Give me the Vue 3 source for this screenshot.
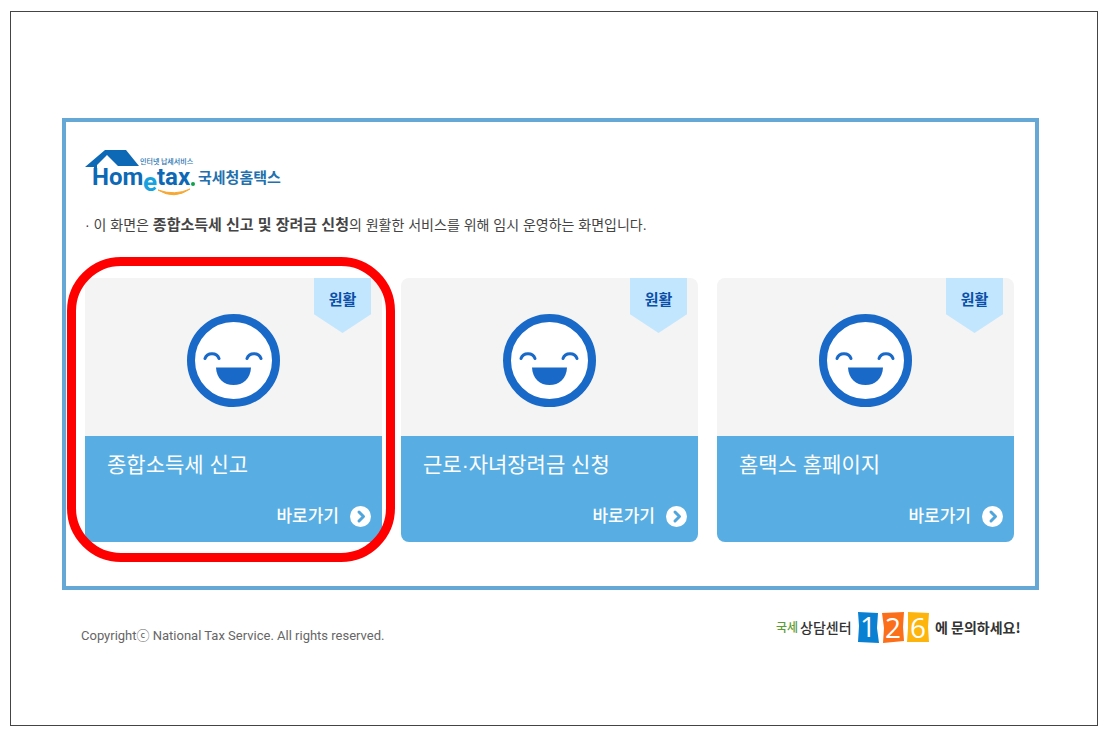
<script setup>
const services = [
  { title: '종합소득세 신고', status: '원활', highlighted: true },
  { title: '근로·자녀장려금 신청', status: '원활', highlighted: false },
  { title: '홈택스 홈페이지', status: '원활', highlighted: false },
]
</script>

<template>
  <div class="frame">
    <main class="panel">
      <svg class="logo" viewBox="0 0 200 48" role="img" aria-label="Hometax 국세청홈택스">
        <path d="M0 18 L20 1 H41 L54 17 H33 L22 6 L12 16 V20 H9 V18 Z" fill="#0d69b5" />
        <text class="latin" x="7" y="36">Hom</text>
        <text class="latin accent" x="58" y="42">e</text>
        <text class="latin" x="72" y="36">tax</text>
        <circle cx="108" cy="35" r="2" fill="#12a04b" />
        <path d="M73 41 Q89 51 105 40 Q90 47 73 41 Z" fill="#f6a833" stroke="#f6a833" stroke-width="1" />
        <text class="tagline" x="55" y="15">인터넷 납세서비스</text>
        <text class="korean" x="113" y="34">국세청홈택스</text>
      </svg>

      <p class="notice">
        · 이 화면은 <strong>종합소득세 신고 및 장려금 신청</strong>의 원활한 서비스를 위해 임시 운영하는 화면입니다.
      </p>

      <ul class="cards">
        <li v-for="service in services" :key="service.title" class="card">
          <div class="visual">
            <svg class="face" viewBox="0 0 93 93" aria-hidden="true">
              <circle cx="46.5" cy="46.5" r="42.5" fill="#fff" stroke="#1969c8" stroke-width="8" />
              <path d="M18 44.500 C20 38 30 38 32 44.500 M60 44.500 C62 38 72 38 74 44.500" fill="none" stroke="#1969c8" stroke-width="3" stroke-linecap="round" />
              <path d="M29 53.500 H64 C63.500 65 56 71 46.500 71 C37 71 29.500 65 29 53.500 Z" fill="#1969c8" />
            </svg>
            <span class="badge">{{ service.status }}</span>
          </div>
          <div class="body">
            <h2>{{ service.title }}</h2>
            <a class="go" href="#">
              바로가기
              <svg viewBox="0 0 21 21" aria-hidden="true">
                <circle cx="10.5" cy="10.5" r="10.5" fill="#fff" />
                <path d="M9 6 L13.500 10.500 L9 15" fill="none" stroke="#4ea6dc" stroke-width="3" stroke-linecap="round" stroke-linejoin="round" />
              </svg>
            </a>
          </div>
          <span v-if="service.highlighted" class="highlight" aria-hidden="true"></span>
        </li>
      </ul>
    </main>

    <footer class="footer">
      <p class="copyright">Copyrightⓒ National Tax Service. All rights reserved.</p>
      <svg class="callcenter" viewBox="0 0 246 36" role="img" aria-label="국세상담센터 126에 문의하세요!">
        <text class="hand green" x="1" y="22">국세</text>
        <text class="hand" x="25" y="23">상담센터</text>
        <path d="M83 2 L103 3 L102 18 L104 33 L83 32 L84 16 Z" fill="#0a80d2" />
        <path d="M107 3 L129 2 L128 17 L129 31 L108 33 L109 18 Z" fill="#fb6f1b" />
        <path d="M133 2 L154 3 L153 17 L154 32 L132 32 L133 18 Z" fill="#fdb50d" />
        <text class="digit" x="93" y="27">1</text>
        <text class="digit" x="118" y="28">2</text>
        <text class="digit" x="143" y="28">6</text>
        <text class="ask" x="160" y="23">에 문의하세요!</text>
      </svg>
    </footer>
  </div>
</template>

<style>
body {
  margin: 0;
  background: #fff;
}
</style>

<style scoped>
.frame {
  margin: 11px 13px 13px 10px;
  padding: 106px 58px 79px 51px;
  border: 1px solid #444;
  font-family: "Liberation Sans", "Noto Sans CJK KR", sans-serif;
  color: #444;
}

.panel {
  padding: 27px 21px 44px 19px;
  border: 4px solid #65a8d5;
}

.logo {
  display: block;
  width: 200px;
  height: 48px;
}

.latin {
  font: 700 24px Roboto, sans-serif;
  fill: #0d69b5;
}

.accent {
  font-size: 26px;
  fill: #16a3e0;
}

.tagline,
.korean {
  font: 500 7px "Noto Sans CJK KR", sans-serif;
  fill: #2370ae;
}

.korean {
  font-size: 15px;
  font-weight: 700;
}

.notice {
  margin: 18px 0 43px;
  font-size: 14px;
  line-height: 20px;
}

.notice strong {
  font-size: 15px;
}

.cards {
  display: grid;
  grid-template-columns: repeat(3, 1fr);
  gap: 19px;
  margin: 0;
  padding: 0;
  list-style: none;
}

.card {
  position: relative;
}

.visual {
  display: flex;
  justify-content: center;
  padding: 36px 0 29px;
  border-radius: 8px 8px 0 0;
  background: #f4f4f4;
}

.face {
  width: 93px;
  height: 93px;
}

.badge {
  position: absolute;
  top: 0;
  right: 11px;
  width: 57px;
  height: 55px;
  background: #c3e6ff;
  clip-path: polygon(0 0, 100% 0, 100% 66%, 50% 100%, 0 66%);
  color: #0b50a8;
  font-size: 15px;
  font-weight: 700;
  line-height: 44px;
  text-align: center;
}

.body {
  padding: 14px 11px 15px 22px;
  border-radius: 0 0 8px 8px;
  background: #58aee3;
  color: #fff;
}

h2 {
  margin: 0 0 26px;
  font-size: 21px;
  font-weight: 400;
  line-height: 30px;
}

.go {
  display: flex;
  align-items: center;
  justify-content: flex-end;
  gap: 11px;
  color: #fff;
  font-size: 17px;
  font-weight: 500;
  line-height: 21px;
  text-decoration: none;
}

.go svg {
  width: 21px;
  height: 21px;
}

.highlight {
  position: absolute;
  inset: -21px -13px -20px -18px;
  border: 9px solid #f00;
  border-radius: 54px;
  pointer-events: none;
}

.footer {
  display: flex;
  align-items: flex-end;
  justify-content: space-between;
  margin-top: 20px;
  padding: 0 18px 0 19px;
}

.copyright {
  margin: 0;
  color: #666;
  font-family: Roboto, "Noto Sans CJK KR", sans-serif;
  font-size: 13px;
  line-height: 20px;
}

.callcenter {
  width: 246px;
  height: 36px;
}

.hand,
.ask {
  font: 500 14px "Noto Sans CJK KR", sans-serif;
  fill: #333;
}

.ask {
  font-weight: 700;
}

.green {
  font-size: 12px;
  fill: #5c9c35;
}

.digit {
  font: 500 28px "Open Sans", sans-serif;
  fill: #fff;
  text-anchor: middle;
}
</style>
